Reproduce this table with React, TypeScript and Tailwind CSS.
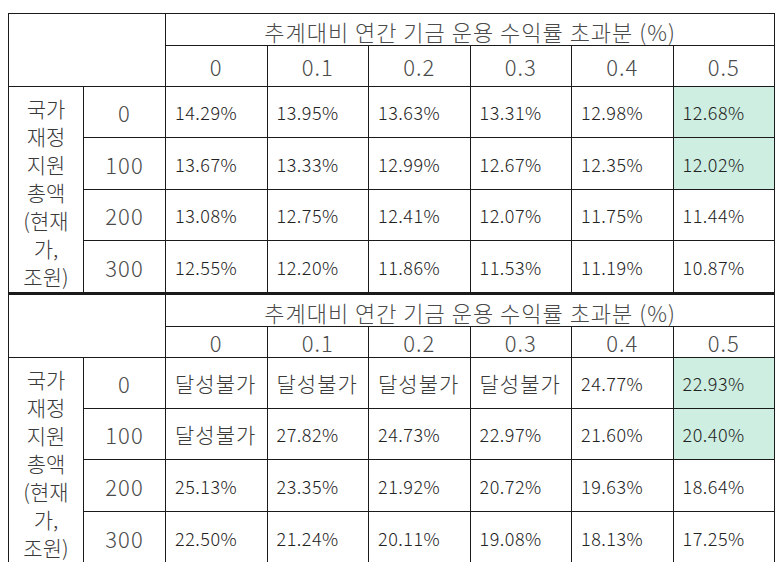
const cols = ["0", "0.1", "0.2", "0.3", "0.4", "0.5"];

type Section = {
  header: [number, number];
  rows: { label: string; h: number; values: string[]; hl?: boolean }[];
  thick?: boolean;
};

const sections: Section[] = [
  {
    header: [32, 41],
    rows: [
      { label: "0", h: 51, values: ["14.29%", "13.95%", "13.63%", "13.31%", "12.98%", "12.68%"], hl: true },
      { label: "100", h: 52, values: ["13.67%", "13.33%", "12.99%", "12.67%", "12.35%", "12.02%"], hl: true },
      { label: "200", h: 51, values: ["13.08%", "12.75%", "12.41%", "12.07%", "11.75%", "11.44%"] },
      { label: "300", h: 53, values: ["12.55%", "12.20%", "11.86%", "11.53%", "11.19%", "10.87%"] },
    ],
  },
  {
    header: [33, 31],
    thick: true,
    rows: [
      { label: "0", h: 51, values: ["달성불가", "달성불가", "달성불가", "달성불가", "24.77%", "22.93%"], hl: true },
      { label: "100", h: 51, values: ["달성불가", "27.82%", "24.73%", "22.97%", "21.60%", "20.40%"], hl: true },
      { label: "200", h: 52, values: ["25.13%", "23.35%", "21.92%", "20.72%", "19.63%", "18.64%"] },
      { label: "300", h: 52, values: ["22.50%", "21.24%", "20.11%", "19.08%", "18.13%", "17.25%"] },
    ],
  },
];

const cell = "border border-[#1a1a1a]";
const light = "font-light text-[22px] tracking-[1px] text-[#4a4a4a]";

export default function App() {
  return (
    <div className="h-[562px] w-[780px] overflow-hidden bg-white pl-2 pt-[13px] [font-family:'Noto_Sans_CJK_KR','Noto_Sans',sans-serif]">
      <table className="table-fixed border-collapse w-[766px]">
        <colgroup>
          <col className="w-[75px]" />
          <col className="w-[82px]" />
          {cols.map((c) => (
            <col key={c} className="w-[101.5px]" />
          ))}
        </colgroup>
        {sections.map((s, si) => (
          <tbody key={si}>
            <tr style={{ height: s.header[0] }}>
              <td
                colSpan={2}
                rowSpan={2}
                className={`${cell} ${s.thick ? "border-t-[3px]" : ""}`}
              />
              <td
                colSpan={6}
                className={`${cell} ${light} text-center leading-none p-0 pt-[2px] ${s.thick ? "border-t-[3px]" : ""}`}
              >
                추계대비 연간 기금 운용 수익률 초과분 (%)
              </td>
            </tr>
            <tr style={{ height: s.header[1] }}>
              {cols.map((c) => (
                <td key={c} className={`${cell} ${light} text-center leading-none p-0`}>
                  {c}
                </td>
              ))}
            </tr>
            {s.rows.map((r, ri) => (
              <tr key={r.label} style={{ height: r.h }}>
                {ri === 0 && (
                  <td
                    rowSpan={4}
                    className={`${cell} align-middle text-center p-0 pt-[4px] font-light text-[21px] leading-[28px] text-[#3a3a3a]`}
                  >
                    국가
                    <br />
                    재정
                    <br />
                    지원
                    <br />
                    총액
                    <br />
                    (현재
                    <br />
                    가,
                    <br />
                    조원)
                  </td>
                )}
                <td className={`${cell} ${light} text-center leading-none p-0`}>{r.label}</td>
                {r.values.map((v, vi) => (
                  <td
                    key={vi}
                    className={`${cell} px-[9px] py-0 leading-none ${
                      v === "달성불가"
                        ? "font-light text-[21px] tracking-[1px] text-[#3a3a3a]"
                        : "font-light text-[18px] tracking-[0.5px] text-[#222]"
                    } ${r.hl && vi === 5 ? "bg-[#cdeee0]" : ""}`}
                  >
                    {v}
                  </td>
                ))}
              </tr>
            ))}
          </tbody>
        ))}
      </table>
    </div>
  );
}
